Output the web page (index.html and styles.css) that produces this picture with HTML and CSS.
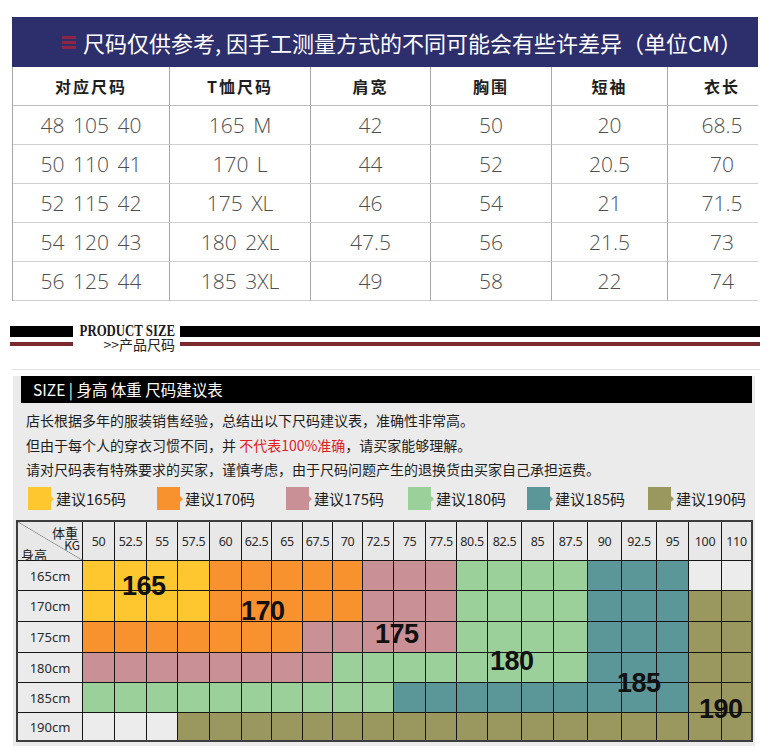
FILE: index.html
```html
<!DOCTYPE html>
<html lang="zh-CN">
<head>
<meta charset="utf-8">
<title>尺码表</title>
<link rel="stylesheet" href="styles.css">
</head>
<body>
<div class="page">
  <section class="measure">
    <div class="banner">
      <svg class="banner-icon" width="14" height="14" viewBox="0 0 14 14"><rect x="0" y="1" width="14" height="3" fill="#a8233c"/><rect x="0" y="6" width="14" height="3" fill="#a8233c"/><rect x="0" y="11" width="14" height="3" fill="#a8233c"/></svg>
      <span>尺码仅供参考, 因手工测量方式的不同可能会有些许差异（单位CM）</span>
    </div>
    <div class="sizes">
      <div class="th">对应尺码</div><div class="th">T恤尺码</div><div class="th">肩宽</div><div class="th">胸围</div><div class="th">短袖</div><div class="th last">衣长</div>
      <div class="td">48 105 40</div><div class="td">165 M</div><div class="td">42</div><div class="td">50</div><div class="td">20</div><div class="td last">68.5</div>
      <div class="td">50 110 41</div><div class="td">170 L</div><div class="td">44</div><div class="td">52</div><div class="td">20.5</div><div class="td last">70</div>
      <div class="td">52 115 42</div><div class="td">175 XL</div><div class="td">46</div><div class="td">54</div><div class="td">21</div><div class="td last">71.5</div>
      <div class="td">54 120 43</div><div class="td">180 2XL</div><div class="td">47.5</div><div class="td">56</div><div class="td">21.5</div><div class="td last">73</div>
      <div class="td">56 125 44</div><div class="td">185 3XL</div><div class="td">49</div><div class="td">58</div><div class="td">22</div><div class="td last">74</div>
    </div>
  </section>

  <div class="divider">
    <div class="bars bars-left"><i class="bar-black"></i><i class="bar-red"></i></div>
    <div class="divider-label"><span class="en">PRODUCT SIZE</span><span class="cn">&gt;&gt;产品尺码</span></div>
    <div class="bars bars-right"><i class="bar-black"></i><i class="bar-red"></i></div>
  </div>
  <div class="rule"></div>

  <section class="advice">
    <div class="advice-title">SIZE | 身高 体重 尺码建议表</div>
    <div class="advice-text">
      <p>店长根据多年的服装销售经验，总结出以下尺码建议表，准确性非常高。</p>
      <p>但由于每个人的穿衣习惯不同，并 <span class="warn">不代表100%准确</span>，请买家能够理解。</p>
      <p>请对尺码表有特殊要求的买家，谨慎考虑，由于尺码问题产生的退换货由买家自己承担运费。</p>
    </div>
    <div class="legend">
      <div class="key"><i class="sw c-y"></i>建议165码</div>
      <div class="key"><i class="sw c-o"></i>建议170码</div>
      <div class="key"><i class="sw c-p"></i>建议175码</div>
      <div class="key"><i class="sw c-g"></i>建议180码</div>
      <div class="key"><i class="sw c-t"></i>建议185码</div>
      <div class="key"><i class="sw c-v"></i>建议190码</div>
    </div>
    <div class="chart">
      <div class="corner"><span class="cw">体重</span><span class="ck">KG</span><span class="ch">身高</span></div>
      <div class="hd">50</div><div class="hd">52.5</div><div class="hd">55</div><div class="hd">57.5</div><div class="hd">60</div><div class="hd">62.5</div><div class="hd">65</div><div class="hd">67.5</div><div class="hd">70</div><div class="hd">72.5</div><div class="hd">75</div><div class="hd">77.5</div><div class="hd">80.5</div><div class="hd">82.5</div><div class="hd">85</div><div class="hd">87.5</div><div class="hd">90</div><div class="hd">92.5</div><div class="hd">95</div><div class="hd">100</div><div class="hd">110</div>

      <div class="rl">165cm</div>
      <i class="c-y"></i><i class="c-y"></i><i class="c-y"></i><i class="c-y"></i><i class="c-o"></i><i class="c-o"></i><i class="c-o"></i><i class="c-o"></i><i class="c-o"></i><i class="c-p"></i><i class="c-p"></i><i class="c-p"></i><i class="c-g"></i><i class="c-g"></i><i class="c-g"></i><i class="c-g"></i><i class="c-t"></i><i class="c-t"></i><i class="c-t"></i><i class="c-e"></i><i class="c-e"></i>

      <div class="rl">170cm</div>
      <i class="c-y"></i><i class="c-y"></i><i class="c-y"></i><i class="c-y"></i><i class="c-o"></i><i class="c-o"></i><i class="c-o"></i><i class="c-o"></i><i class="c-o"></i><i class="c-p"></i><i class="c-p"></i><i class="c-p"></i><i class="c-g"></i><i class="c-g"></i><i class="c-g"></i><i class="c-g"></i><i class="c-t"></i><i class="c-t"></i><i class="c-t"></i><i class="c-v"></i><i class="c-v"></i>

      <div class="rl">175cm</div>
      <i class="c-o"></i><i class="c-o"></i><i class="c-o"></i><i class="c-o"></i><i class="c-o"></i><i class="c-o"></i><i class="c-o"></i><i class="c-p"></i><i class="c-p"></i><i class="c-p"></i><i class="c-p"></i><i class="c-p"></i><i class="c-g"></i><i class="c-g"></i><i class="c-g"></i><i class="c-g"></i><i class="c-t"></i><i class="c-t"></i><i class="c-t"></i><i class="c-v"></i><i class="c-v"></i>

      <div class="rl">180cm</div>
      <i class="c-p"></i><i class="c-p"></i><i class="c-p"></i><i class="c-p"></i><i class="c-p"></i><i class="c-p"></i><i class="c-p"></i><i class="c-p"></i><i class="c-g"></i><i class="c-g"></i><i class="c-g"></i><i class="c-g"></i><i class="c-g"></i><i class="c-g"></i><i class="c-g"></i><i class="c-g"></i><i class="c-t"></i><i class="c-t"></i><i class="c-t"></i><i class="c-v"></i><i class="c-v"></i>

      <div class="rl">185cm</div>
      <i class="c-g"></i><i class="c-g"></i><i class="c-g"></i><i class="c-g"></i><i class="c-g"></i><i class="c-g"></i><i class="c-g"></i><i class="c-g"></i><i class="c-g"></i><i class="c-g"></i><i class="c-t"></i><i class="c-t"></i><i class="c-t"></i><i class="c-t"></i><i class="c-t"></i><i class="c-t"></i><i class="c-t"></i><i class="c-t"></i><i class="c-t"></i><i class="c-v"></i><i class="c-v"></i>

      <div class="rl">190cm</div>
      <i class="c-e"></i><i class="c-e"></i><i class="c-e"></i><i class="c-v"></i><i class="c-v"></i><i class="c-v"></i><i class="c-v"></i><i class="c-v"></i><i class="c-v"></i><i class="c-v"></i><i class="c-v"></i><i class="c-v"></i><i class="c-v"></i><i class="c-v"></i><i class="c-v"></i><i class="c-v"></i><i class="c-v"></i><i class="c-v"></i><i class="c-v"></i><i class="c-v"></i><i class="c-v"></i>

      <span class="big n165">165</span>
      <span class="big n170">170</span>
      <span class="big n175">175</span>
      <span class="big n180">180</span>
      <span class="big n185">185</span>
      <span class="big n190">190</span>
    </div>
  </section>
</div>
</body>
</html>
```

FILE: styles.css
```css
* { box-sizing: border-box; }
html, body { margin: 0; padding: 0; background: #fff; }
body {
  width: 770px;
  height: 754px;
  overflow: hidden;
  font-family: "Noto Sans CJK SC", "Noto Sans", sans-serif;
  color: #222;
}
p { margin: 0; }
i { display: block; font-style: normal; }

/* ---------- measurement table ---------- */
.measure { margin: 17px 12px 0 12px; width: 746px; }
.banner {
  height: 50px;
  background: #2d2e6c;
  color: #fff;
  display: flex;
  align-items: center;
  gap: 7px;
  padding-left: 50px;
  font-size: 22px;
  line-height: 1;
  white-space: nowrap;
}
.banner-icon { flex: none; opacity: 0.8; }

.sizes {
  display: grid;
  grid-template-columns: 157px 141px 120px 121px 116px 90px;
  grid-auto-rows: 39px;
  border-left: 1px solid #a8a8a8;
}
.th, .td {
  display: flex;
  align-items: center;
  justify-content: center;
  border-right: 1px solid #a8a8a8;
  border-bottom: 1px solid #cfcfcf;
  white-space: nowrap;
}
.th.last, .td.last { border-right: none; padding-left: 18px; }
.th {
  font-weight: 700;
  font-size: 16px;
  letter-spacing: 2px;
  color: #1e1e1e;
  border-bottom-color: #bdbdbd;
}
.td {
  font-family: "Open Sans", "Noto Sans", sans-serif;
  font-weight: 300;
  font-size: 21px;
  word-spacing: 3px;
  color: #4e4e4e;
}

/* ---------- divider ---------- */
.divider {
  margin-top: 24px;
  height: 26px;
  display: flex;
  padding: 0 10px;
}
.bars { padding-top: 1px; display: flex; flex-direction: column; gap: 5px; }
.bars-left { width: 63px; }
.bars-right { flex: 1; margin-left: 5px; }
.bar-black { height: 11px; background: #000; }
.bar-red { height: 4px; background: #7a2a2f; }
.divider-label {
  width: 96px;
  margin-left: 6px;
  display: flex;
  flex-direction: column;
  align-items: flex-end;
}
.divider-label .en {
  display: block;
  width: 120px;
  font-family: "Liberation Serif", serif;
  font-weight: 700;
  font-size: 16px;
  line-height: 12px;
  color: #1a1a1a;
  white-space: nowrap;
  transform: scaleX(0.8);
  transform-origin: right top;
  text-align: right;
}
.divider-label .cn {
  display: block;
  margin-top: 0;
  font-size: 14px;
  line-height: 14px;
  color: #222;
  white-space: nowrap;
}
.rule { margin: 18px 10px 0 12px; height: 1px; background: #e2e2e2; }

/* ---------- advice panel ---------- */
.advice {
  margin: 0 15px 0 13px;
  background: #ebebeb;
  padding-bottom: 4px;
}
.advice-title {
  margin: 6px 3px 0 8px;
  height: 27px;
  background: #000;
  color: #fff;
  font-size: 15.5px;
  line-height: 27px;
  padding-left: 12px;
  white-space: nowrap;
}
.advice-text {
  margin-top: 5px;
  padding-left: 13px;
  font-size: 14px;
  line-height: 24.5px;
  color: #1e1e1e;
  white-space: nowrap;
}
.warn { color: #e0201e; }

.legend {
  margin-top: 5.5px;
  padding-left: 15px;
  height: 23px;
  display: grid;
  grid-template-columns: 129px 129px 122px 119px 121px auto;
}
.key {
  display: flex;
  align-items: center;
  gap: 5px;
  font-size: 15px;
  line-height: 23px;
  color: #1e1e1e;
  white-space: nowrap;
}
.sw { width: 23px; height: 23px; position: relative; flex: none; }
.sw::after {
  content: "";
  position: absolute;
  right: -3px;
  top: 9px;
  border-left: 3px solid;
  border-top: 3px solid transparent;
  border-bottom: 3px solid transparent;
}
.sw.c-y::after { border-left-color: #fec62f; }
.sw.c-o::after { border-left-color: #f8922f; }
.sw.c-p::after { border-left-color: #c99096; }
.sw.c-g::after { border-left-color: #9cd09a; }
.sw.c-t::after { border-left-color: #5b9698; }
.sw.c-v::after { border-left-color: #9b985f; }

/* ---------- chart ---------- */
.chart {
  position: relative;
  margin: 10px 0 0 3px;
  width: max-content;
  display: grid;
  grid-template-columns: 64px 31px 31px 30px 31px 31px 29px 30px 29px 29px 30px 31px 30px 30px 33px 31px 33px 33px 34px 31px 32px 29px;
  grid-template-rows: 38px 29px 30px 30px 29px 29px 27px;
  gap: 1px;
  background: #151515;
  border: 2px solid #3d3d3d;
}
.corner {
  background-color: #e8e8e8;
  background-image: linear-gradient(to top right, transparent calc(50% - 0.7px), #8a8a8a 50%, transparent calc(50% + 0.7px));
  display: flex;
  flex-direction: column;
  padding: 5px 2px 0 3px;
  color: #222;
}
.corner .cw { align-self: flex-end; padding-right: 2px; font-size: 13px; line-height: 12px; }
.corner .ck { align-self: flex-end; font-size: 12px; line-height: 11px; }
.corner .ch { align-self: flex-start; font-size: 13px; line-height: 12px; margin-top: -1px; }
.hd {
  background: #e8e8e8;
  display: flex;
  align-items: center;
  justify-content: center;
  font-family: "Noto Sans", sans-serif;
  font-size: 12.5px;
  letter-spacing: -0.3px;
  color: #2a2a2a;
  white-space: nowrap;
}
.rl {
  background: #ebebeb;
  display: flex;
  align-items: center;
  justify-content: center;
  font-family: "Noto Sans", sans-serif;
  font-size: 13px;
  color: #2a2a2a;
}
.c-y { background: #fec62f; }
.c-o { background: #f8922f; }
.c-p { background: #c99096; }
.c-g { background: #9cd09a; }
.c-t { background: #5b9698; }
.c-v { background: #9b985f; }
.c-e { background: #ececec; }

.big {
  position: absolute;
  font-family: "Liberation Sans", Arial, sans-serif;
  font-weight: 700;
  font-size: 27px;
  line-height: 1;
  color: #111;
  letter-spacing: -0.5px;
}
.n165 { left: 104px; top: 51px; }
.n170 { left: 223px; top: 76px; }
.n175 { left: 357px; top: 99px; }
.n180 { left: 472px; top: 126px; }
.n185 { left: 599px; top: 148px; }
.n190 { left: 681px; top: 174px; }
```
